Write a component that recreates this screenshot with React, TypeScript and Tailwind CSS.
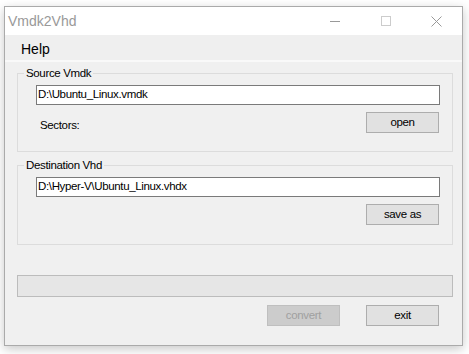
export default function App() {
  return (
    <div className="min-h-screen bg-white pl-[4px] pt-[6px] font-['Liberation_Sans',Arial,sans-serif]">
      <div className="flex h-[340px] w-[459px] flex-col border border-[#aaaaaa] bg-[#f0f0f0] shadow-[0_3px_10px_rgba(0,0,0,0.22)]">
        {/* title bar */}
        <div className="flex h-[28px] items-center bg-white">
          <span className="pl-[3px] text-[14px] text-[#999999]">Vmdk2Vhd</span>
          <div className="ml-auto flex h-full">
            <div className="flex w-[51px] items-center justify-center">
              <div className="h-px w-[10px] bg-[#999999]" />
            </div>
            <div className="flex w-[51px] items-center justify-center">
              <div className="h-[10px] w-[10px] border border-[#cccccc]" />
            </div>
            <div className="flex w-[51px] items-center justify-center">
              <svg width="11" height="11" viewBox="0 0 11 11">
                <path d="M0.5 0.5 L10.5 10.5 M10.5 0.5 L0.5 10.5" stroke="#999999" strokeWidth="1" />
              </svg>
            </div>
          </div>
        </div>

        {/* menu */}
        <div className="flex h-[25px] items-center bg-[#efefef] pl-[16px] pt-[3px] text-[14px] text-black">Help</div>
        <div className="h-[2px] bg-[#f9f9f9]" />

        {/* content */}
        <div className="flex flex-1 flex-col pl-[12px] pr-[9px] text-[11.5px] tracking-[-0.35px] text-black">
          <fieldset className="mt-[5px] border border-[#dcdcdc] px-0 pb-[18px]">
            <legend className="ml-[6px] px-[2px] leading-[13px]">Source Vmdk</legend>
            <div className="pl-[18px] pr-[12px]">
              <div className="mt-[5px] flex h-[20px] items-center border border-[#7a7a7a] bg-white pl-[1px]">
                D:\Ubuntu_Linux.vmdk
              </div>
              <div className="mt-[7px] flex items-end justify-between">
                <span className="pb-[1px] pl-[4px] leading-[13px]">Sectors:</span>
                <button className="mr-[1px] h-[21px] w-[73px] border border-[#adadad] bg-[#e1e1e1]">open</button>
              </div>
            </div>
          </fieldset>

          <fieldset className="mt-[7px] border border-[#dcdcdc] px-0 pb-[19px]">
            <legend className="ml-[6px] px-[2px] leading-[13px]">Destination Vhd</legend>
            <div className="pl-[18px] pr-[12px]">
              <div className="mt-[5px] flex h-[20px] items-center border border-[#7a7a7a] bg-white pl-[1px]">
                D:\Hyper-V\Ubuntu_Linux.vhdx
              </div>
              <div className="mt-[7px] flex justify-end">
                <button className="mr-[1px] h-[21px] w-[73px] border border-[#adadad] bg-[#e1e1e1]">save as</button>
              </div>
            </div>
          </fieldset>

          <div className="mt-[30px] h-[22px] border border-[#bcbcbc] bg-[#e6e6e6]" />

          <div className="mt-[8px] flex justify-end gap-[26px] pr-[14px]">
            <button disabled className="h-[21px] w-[73px] border border-[#bfbfbf] bg-[#cccccc] text-[#a0a0a0]">
              convert
            </button>
            <button className="h-[21px] w-[73px] border border-[#adadad] bg-[#e1e1e1]">exit</button>
          </div>
        </div>
      </div>
    </div>
  );
}
